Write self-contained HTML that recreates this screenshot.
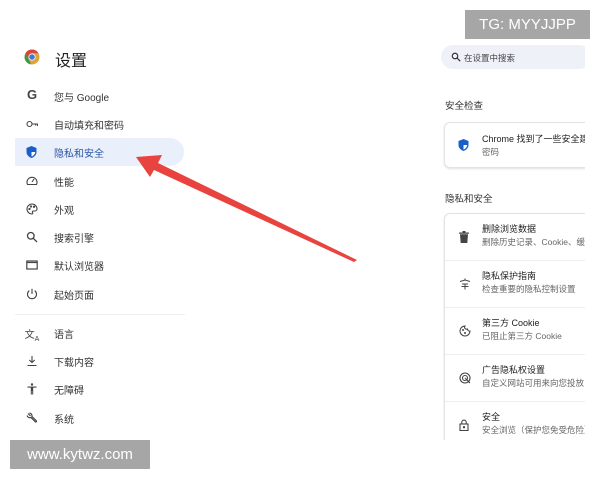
<!DOCTYPE html>
<html><head><meta charset="utf-8"><style>
*{margin:0;padding:0;box-sizing:border-box}
body{width:600px;height:480px;background:#fff;position:relative;overflow:hidden;font-family:"Liberation Sans","Noto Sans CJK SC",sans-serif;color:#202124}
.a{position:absolute}
.nav{position:absolute;left:0;width:200px;height:14px;font-size:10px;color:#333;white-space:nowrap}
.ic{position:absolute;left:24px;top:0;width:16px;text-align:center;font-size:11px;color:#444}
.nav svg{position:absolute;left:26px;top:1px}
.lb{position:absolute;left:54px;top:0}
.card{position:absolute;left:444px;width:150px;border:1px solid #e3e3e3;border-radius:6px;background:#fff;box-shadow:0 1px 2px rgba(0,0,0,.12)}
.row{position:absolute;left:0;right:0;height:47px;border-bottom:1px solid #eee}
.row .t{position:absolute;left:37px;top:8px;font-size:9px;color:#222;white-space:nowrap}
.row .s{position:absolute;left:37px;top:22px;font-size:8.5px;color:#666;white-space:nowrap}
.row svg{position:absolute;left:14px;top:17px}
</style></head><body>
<svg class="a" style="left:24px;top:49px" width="16" height="16" viewBox="0 0 16 16"><circle cx="8" cy="8" r="7.5" fill="#e0a33a"/><path d="M8 .5A7.5 7.5 0 0 1 14.5 4.3H8Z" fill="#d8453a"/><path d="M1.4 4.5A7.5 7.5 0 0 1 8 .5L8 4.3 4.6 9.6Z" fill="#d8453a"/><path d="M1.4 4.5 4.7 10 7 15.4A7.5 7.5 0 0 1 1.4 4.5Z" fill="#3a9a4b"/><circle cx="8" cy="8" r="3.6" fill="#fff"/><circle cx="8" cy="8" r="2.8" fill="#3b78d8"/></svg>
<div class="a" style="left:55px;top:47px;font-size:16px;color:#222">设置</div>
<div class="a" style="left:15px;top:138px;width:169px;height:28px;background:#e9effb;border-radius:0 14px 14px 0"></div>
<div class="nav" style="top:89px"><span class="ic" style="font-weight:bold;font-size:13px;top:-2px">G</span><span class="lb">您与 Google</span></div>
<div class="nav" style="top:117px"><svg width="12" height="12" viewBox="0 0 12 12" fill="none" stroke="#444" stroke-width="1.1"><circle cx="3.5" cy="6" r="2.5"/><path d="M6 6H11.5V8M9.5 6V7.5"/></svg><span class="lb">自动填充和密码</span></div>
<div class="nav" style="top:145px;color:#2b56a6"><svg width="11" height="12" viewBox="0 0 11 12"><path d="M5.5 0 10.5 2V6C10.5 9 8 11 5.5 12 3 11 .5 9 .5 6V2Z" fill="#1a5fc9"/><path d="M5.5 1.5V6H9.2C9 8.3 7.4 9.8 5.5 10.5Z" fill="#fff"/></svg><span class="lb">隐私和安全</span></div>
<div class="nav" style="top:174px"><svg width="12" height="12" viewBox="0 0 12 12" fill="none" stroke="#444" stroke-width="1.1"><path d="M1.5 9.5A5 5 0 1 1 10.5 9.5ZM6 7 8 4"/></svg><span class="lb">性能</span></div>
<div class="nav" style="top:202px"><svg width="12" height="12" viewBox="0 0 12 12" fill="none" stroke="#444" stroke-width="1.1"><path d="M6 1A5 5 0 1 0 6 11C7 11 7 10 6.5 9.5 6 8.8 6.5 8 7.5 8H9A2 2 0 0 0 11 6 5 5 0 0 0 6 1Z"/><circle cx="3.5" cy="6" r=".6"/><circle cx="5" cy="3.5" r=".6"/><circle cx="8" cy="3.8" r=".6"/></svg><span class="lb">外观</span></div>
<div class="nav" style="top:230px"><svg width="12" height="12" viewBox="0 0 12 12" fill="none" stroke="#444" stroke-width="1.3"><circle cx="4.8" cy="4.8" r="3.3"/><path d="M7.3 7.3 11 11"/></svg><span class="lb">搜索引擎</span></div>
<div class="nav" style="top:258px"><svg width="12" height="12" viewBox="0 0 12 12" fill="none" stroke="#444" stroke-width="1.2"><rect x=".8" y="2" width="10.4" height="8"/><path d="M.8 3.5H11.2"/></svg><span class="lb">默认浏览器</span></div>
<div class="nav" style="top:287px"><svg width="12" height="12" viewBox="0 0 12 12" fill="none" stroke="#444" stroke-width="1.1"><path d="M6 .8V6M3.3 2.6A4.5 4.5 0 1 0 8.7 2.6"/></svg><span class="lb">起始页面</span></div>
<div class="a" style="left:15px;top:314px;width:170px;height:1px;background:#eee"></div>
<div class="nav" style="top:326px"><span class="ic" style="font-size:10px">文<sub style="font-size:7px">A</sub></span><span class="lb">语言</span></div>
<div class="nav" style="top:354px"><svg width="12" height="12" viewBox="0 0 12 12" fill="none" stroke="#444" stroke-width="1.1"><path d="M6 1V7.5M3.3 5 6 7.5 8.7 5M1.5 10.5H10.5"/></svg><span class="lb">下载内容</span></div>
<div class="nav" style="top:382px"><svg width="12" height="12" viewBox="0 0 12 12" fill="#444"><circle cx="6" cy="1.5" r="1.2"/><path d="M1.5 3.5H10.5V4.6H7.2V11.5H6.2V8H5.8V11.5H4.8V4.6H1.5Z"/></svg><span class="lb">无障碍</span></div>
<div class="nav" style="top:411px"><svg width="12" height="12" viewBox="0 0 12 12" fill="none" stroke="#444" stroke-width="1.2"><path d="M2 1.5 4.5 4M1 3.5A3 3 0 0 0 5 5.5L9.5 10A1 1 0 0 0 10.5 9L6 4.5A3 3 0 0 0 3.5 1"/></svg><span class="lb">系统</span></div>

<div class="a" style="left:441px;top:45px;width:150px;height:24px;background:#eef1f8;border-radius:12px"></div>
<svg class="a" style="left:451px;top:52px" width="10" height="10" viewBox="0 0 12 12" fill="none" stroke="#333" stroke-width="1.4"><circle cx="4.8" cy="4.8" r="3.3"/><path d="M7.3 7.3 11 11"/></svg>
<div class="a" style="left:464px;top:52px;font-size:8.5px;color:#444">在设置中搜索</div>
<div class="a" style="left:445px;top:98px;font-size:9.5px;color:#333">安全检查</div>
<div class="card" style="top:122px;height:46px">
<svg class="a" style="left:13px;top:16px" width="11" height="12" viewBox="0 0 11 12"><path d="M5.5 0 10.5 2V6C10.5 9 8 11 5.5 12 3 11 .5 9 .5 6V2Z" fill="#1a5fc9"/><path d="M5.5 1.5V6H9.2C9 8.3 7.4 9.8 5.5 10.5Z" fill="#fff"/></svg>
<div class="a" style="left:37px;top:9px;font-size:9px;white-space:nowrap">Chrome 找到了一些安全建议</div>
<div class="a" style="left:37px;top:23px;font-size:8.5px;color:#666">密码</div></div>
<div class="a" style="left:445px;top:191px;font-size:9.5px;color:#333">隐私和安全</div>
<div class="card" style="top:213px;height:232px;border-radius:6px 6px 0 0">
<div class="row" style="top:0"><svg width="10" height="12" viewBox="0 0 10 12" fill="#444"><path d="M0 1.5H10V2.7H0ZM3.5 0H6.5V1.5H3.5ZM1 3.2H9L8.3 12H1.7Z"/></svg><span class="t">删除浏览数据</span><span class="s">删除历史记录、Cookie、缓存</span></div>
<div class="row" style="top:47px"><svg width="12" height="12" viewBox="0 0 12 12" fill="none" stroke="#444" stroke-width="1"><path d="M6 .5V2M1 3.5 6 2 11 3.5M3 6H9M6 6V11.5M2.5 8.5H9.5"/></svg><span class="t">隐私保护指南</span><span class="s">检查重要的隐私控制设置</span></div>
<div class="row" style="top:94px"><svg width="12" height="12" viewBox="0 0 12 12" fill="none" stroke="#444" stroke-width="1"><path d="M6 1A5 5 0 1 0 11 6 2 2 0 0 1 8.5 4 2 2 0 0 1 6 1Z"/><circle cx="4" cy="5" r=".5"/><circle cx="6" cy="8" r=".5"/></svg><span class="t">第三方 Cookie</span><span class="s">已阻止第三方 Cookie</span></div>
<div class="row" style="top:141px"><svg width="12" height="12" viewBox="0 0 12 12" fill="none" stroke="#444" stroke-width="1.1"><circle cx="6" cy="6" r="5"/><circle cx="6" cy="6" r="2.5"/><path d="M6 6 11 11"/></svg><span class="t">广告隐私权设置</span><span class="s">自定义网站可用来向您投放</span></div>
<div class="row" style="top:188px;border:0"><svg width="10" height="12" viewBox="0 0 10 12" fill="none" stroke="#444" stroke-width="1.1"><rect x="1" y="5" width="8" height="6.5"/><path d="M2.8 5V3.3A2.2 2.2 0 0 1 7.2 3.3V5"/><circle cx="5" cy="8.2" r=".6" fill="#444"/></svg><span class="t">安全</span><span class="s">安全浏览（保护您免受危险）</span></div>
</div>
<div class="a" style="left:585px;top:0;width:15px;height:480px;background:#fff"></div>
<div class="a" style="left:0;top:440px;width:600px;height:40px;background:#fff"></div>

<svg class="a" style="left:0;top:0" width="600" height="480"><polygon points="136,157 162,155 158,163 357,260 354,262 154,170 150,177" fill="#e8433e"/></svg>

<div class="a" style="left:465px;top:10px;width:125px;height:29px;background:#a6a6a6;color:#fff;font-size:15px;line-height:29px;text-align:center">TG: MYYJJPP</div>
<div class="a" style="left:10px;top:440px;width:140px;height:29px;background:#a6a6a6;color:#fff;font-size:15px;line-height:29px;text-align:center">www.kytwz.com</div>
</body></html>
